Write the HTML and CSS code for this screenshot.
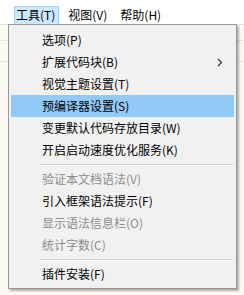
FILE: index.html
```html
<!DOCTYPE html>
<html lang="zh-CN">
<head>
  <meta charset="UTF-8" />
  <title>工具菜单</title>
  <link rel="stylesheet" href="styles.css">
</head>
<body>
  <div class="menubar">
    <span class="menubar-item active">工具(T)</span>
    <span class="menubar-item">视图(V)</span>
    <span class="menubar-item">帮助(H)</span>
  </div>

  <div class="editor">
    <div class="editor-line"></div>
    <div class="editor-line"></div>
  </div>

  <div class="dropdown">
    <div class="menu-item">选项(P)</div>
    <div class="menu-item">扩展代码块(B)
      <svg class="submenu-arrow" width="6" height="9" viewBox="0 0 6 9"><path d="M1 1 L4.5 4.5 L1 8" fill="none" stroke="#333" stroke-width="1.2"/></svg>
    </div>
    <div class="menu-item">视觉主题设置(T)</div>
    <div class="menu-item selected">预编译器设置(S)</div>
    <div class="menu-item">变更默认代码存放目录(W)</div>
    <div class="menu-item">开启启动速度优化服务(K)</div>
    <div class="separator"></div>
    <div class="menu-item disabled">验证本文档语法(V)</div>
    <div class="menu-item">引入框架语法提示(F)</div>
    <div class="menu-item disabled">显示语法信息栏(O)</div>
    <div class="menu-item disabled">统计字数(C)</div>
    <div class="separator"></div>
    <div class="menu-item">插件安装(F)</div>
  </div>
</body>
</html>
```

FILE: styles.css
```css
* {
  margin: 0;
  padding: 0;
  box-sizing: border-box;
}

body {
  font-family: "Noto Sans CJK SC", "Noto Sans", sans-serif;
  font-size: 12px;
  color: #000;
  background: #fbf9f1;
  width: 244px;
  height: 295px;
  overflow: hidden;
  position: relative;
}

.menubar {
  display: flex;
  align-items: flex-end;
  height: 25px;
  padding-left: 14px;
  background: #fff;
  border-bottom: 1px solid #e3e3e3;
}

.menubar-item {
  height: 18px;
  line-height: 16px;
  padding: 0 3px 0 1px;
  margin-right: 7px;
  border: 1px solid transparent;
}

.menubar-item.active {
  background: #cce8ff;
  border-color: #99d1ff;
  border-bottom: none;
}

.editor {
  padding-top: 15px;
}

.editor-line {
  height: 21px;
  border-top: 1px solid #e8e6de;
}

.dropdown {
  position: absolute;
  top: 24px;
  left: 8px;
  width: 229px;
  padding: 4px 2px 3px 2px;
  background: #f1f1f1;
  border: 1px solid #979797;
  box-shadow: 2px 2px 2px rgba(0, 0, 0, 0.3);
}

.menu-item {
  position: relative;
  height: 22px;
  line-height: 21px;
  padding-left: 31px;
  white-space: nowrap;
}

.menu-item.selected {
  background: #91c9f7;
}

.menu-item.disabled {
  color: #8c8c8c;
}

.submenu-arrow {
  position: absolute;
  right: 11px;
  top: 7px;
}

.separator {
  height: 7px;
  margin-left: 28px;
  padding-top: 3px;
}

.separator::before {
  content: '';
  display: block;
  border-top: 1px solid #d7d7d7;
  border-bottom: 1px solid #fff;
}
```
